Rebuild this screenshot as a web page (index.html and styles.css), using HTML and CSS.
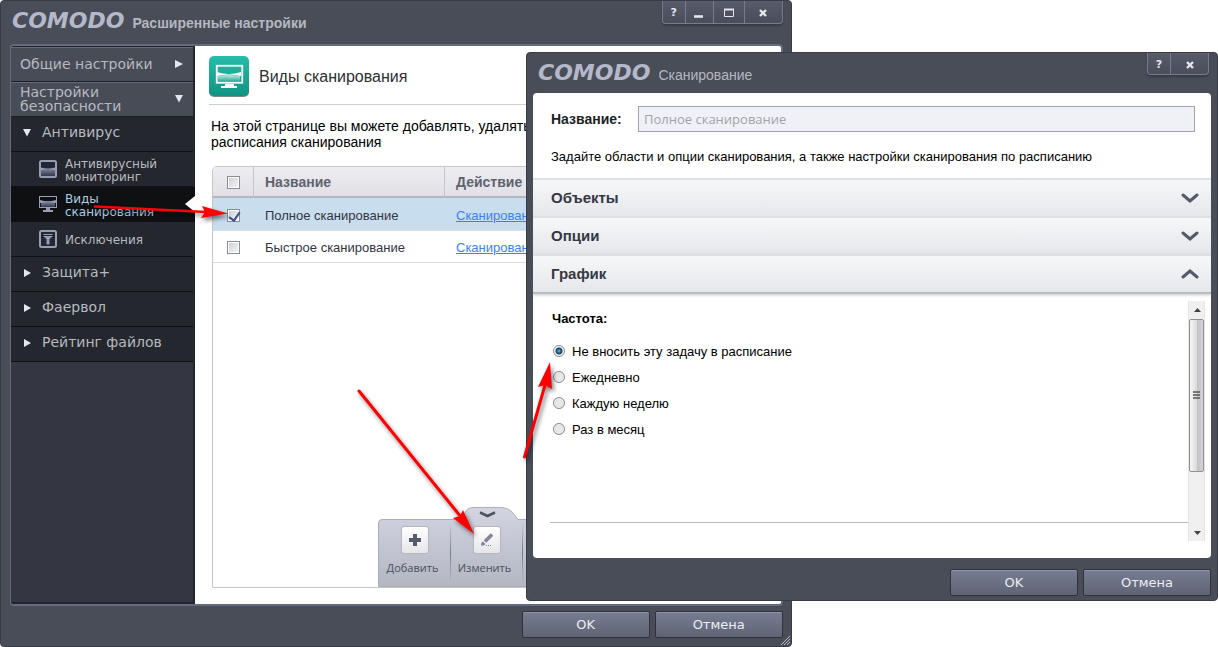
FILE: index.html
```html
<!DOCTYPE html>
<html lang="ru">
<head>
<meta charset="utf-8">
<title>COMODO</title>
<link rel="stylesheet" href="styles.css">
</head>
<body>
<div class="desktop">
  <section class="window settings" aria-label="Расширенные настройки">
    <header class="titlebar">
      <span class="logo">COMODO</span>
      <h1 class="caption strong">Расширенные настройки</h1>
      <div class="controls">
        <button type="button" class="ctl small" aria-label="Справка"><b>?</b></button>
        <button type="button" class="ctl min" aria-label="Свернуть"><svg width="10" height="10"><path d="M0 8.500h9" stroke="#e4e6ee" stroke-width="2.600"/></svg></button>
        <button type="button" class="ctl max" aria-label="Развернуть"><svg width="10" height="10"><path d="M.5 1v7.500h9V1" fill="none" stroke="#e4e6ee"/><path d="M0 1.500h10" stroke="#e4e6ee" stroke-width="2"/></svg></button>
        <button type="button" class="ctl close" aria-label="Закрыть"><svg width="10" height="10"><path d="M2 2l6 6M8 2l-6 6" stroke="#e4e6ee" stroke-width="2.400"/></svg></button>
      </div>
    </header>

    <div class="frame">
      <nav class="sidebar">
        <a href="#" class="group">Общие настройки<svg class="tri" width="8" height="10"><path d="M0 1v8l8-4z"/></svg></a>
        <a href="#" class="group">Настройки<br>безопасности<svg class="tri" width="8" height="10"><path d="M0 1h8l-4 7.500z"/></svg></a>
        <a href="#" class="item"><svg class="tri" width="8" height="10"><path d="M0 2h8l-4 7.500z"/></svg>Антивирус</a>
        <a href="#" class="sub">
          <svg width="18" height="18" fill="none"><defs><linearGradient id="gl" x2="0" y2="1"><stop offset="0" stop-color="#7b8299"/><stop offset="1" stop-color="#353a47"/></linearGradient></defs><path d="M2 9h14v7H2z" fill="url(#gl)"/><rect x="1" y="1" width="16" height="16" rx="1.500" stroke="#969db6" stroke-width="2"/><path d="M2 7.500q7 2 14 0v2.500q-7-1.500-14 0z" fill="#969db6"/></svg>
          <span>Антивирусный<br>мониторинг</span></a>
        <a href="#" class="sub active">
          <svg width="18" height="18" fill="none"><path d="M2 7h14v5H2z" fill="url(#gl)"/><rect x=".5" y="1.500" width="17" height="11" stroke="#969db6"/><path d="M1 5q8 2.500 16 0v3q-8-2-16 0z" fill="#969db6"/><path d="M7 13h4v2h3v2H4v-2h3z" fill="#969db6"/></svg>
          <span>Виды<br>сканирования</span></a>
        <a href="#" class="sub">
          <svg width="18" height="18" fill="none"><rect x="1" y="1" width="16" height="16" rx="1.500" stroke="#969db6" stroke-width="2"/><path d="M4.500 4.500h9" stroke="#969db6"/><path d="M4 6h10l-3.500 3v5.500h-3V9z" fill="#969db6"/></svg>
          <span>Исключения</span></a>
        <a href="#" class="item"><svg class="tri" width="8" height="10"><path d="M1 2v8l7-4z"/></svg>Защита+</a>
        <a href="#" class="item"><svg class="tri" width="8" height="10"><path d="M1 2v8l7-4z"/></svg>Фаервол</a>
        <a href="#" class="item"><svg class="tri" width="8" height="10"><path d="M1 2v8l7-4z"/></svg>Рейтинг файлов</a>
      </nav>

      <main class="content">
        <div class="heading">
          <svg width="40" height="42" viewBox="0 0 40 42"><defs><linearGradient id="teal" x2="0" y2="1"><stop offset="0" stop-color="#27bda9"/><stop offset="1" stop-color="#0f9482"/></linearGradient><linearGradient id="scr" x2="0" y2="1"><stop offset="0" stop-color="#bfe8e2"/><stop offset="1" stop-color="#1fa392"/></linearGradient></defs><rect y="2" width="40" height="39" rx="5" fill="#7d8a8d"/><rect width="40" height="40" rx="5" fill="url(#teal)"/><path d="M9 20q11-2 22 0v6H9z" fill="url(#scr)"/><path d="M8 16q12 4 24 0v4q-12-3-24 0z" fill="#fff"/><rect x="7.750" y="9.750" width="25.500" height="17" fill="none" stroke="#fff" stroke-width="1.800"/><path d="M16 28h9v2h3v2H12v-2h4z" fill="#fff"/></svg>
          <h2>Виды сканирования</h2>
        </div>
        <p class="intro">На этой странице вы можете добавлять, удалять<br>расписания сканирования</p>
        <div class="list">
          <table>
            <thead><tr><th class="c-check"><input type="checkbox" aria-label="Выбрать все"></th><th class="c-name">Название</th><th>Действие</th></tr></thead>
            <tbody>
              <tr class="selected"><td><input type="checkbox" checked aria-label="Полное сканирование"></td><td>Полное сканирование</td><td><a href="#">Сканирование</a></td></tr>
              <tr><td><input type="checkbox" aria-label="Быстрое сканирование"></td><td>Быстрое сканирование</td><td><a href="#">Сканирование</a></td></tr>
            </tbody>
          </table>
          <div class="toolbar">
            <svg class="tab" width="70" height="14"><defs><linearGradient id="tabg" x2="0" y2="1"><stop offset="0" stop-color="#d3d6e0"/><stop offset="1" stop-color="#cdd0dc"/></linearGradient></defs><path d="M0 12.500Q6 12 9 6Q11 .5 17 .500H46Q52 .5 56 5L62 12.500V14H0z" fill="url(#tabg)"/><path d="M0 12.500Q6 12 9 6Q11 .5 17 .500H46Q52 .5 56 5L62 12.500" fill="none" stroke="#adb1bb"/><path d="M24 5.500l7.500 3.500 7.500-3.500" fill="none" stroke="#4d5262" stroke-width="2.500"/></svg>
            <button type="button" class="tool"><span class="tile"><svg width="14" height="14"><path d="M7 1v12M1 7h12" stroke="#555b6c" stroke-width="4"/></svg></span>Добавить</button>
            <button type="button" class="tool"><span class="tile"><svg width="14" height="14"><path d="M5 8.500L12 1.500" stroke="#7f8596" stroke-width="3.500"/><path d="M1 12.500q0-3.500 2-4l2.500 2.500q-1 2-4.500 1.500z" fill="#7f8596"/><path d="M6 12.500h6" stroke="#7f8596" stroke-dasharray="1 1"/></svg></span>Изменить</button>
          </div>
        </div>
      </main>
    </div>

    <footer class="actions">
      <button type="button" class="btn">OK</button>
      <button type="button" class="btn">Отмена</button>
      <svg class="grip" width="9" height="9"><path d="M0 9l9-9M3 9l6-6M6 9l3-3" stroke="#b8bccb"/></svg>
    </footer>
  </section>

  <section class="window scan" role="dialog" aria-label="Сканирование">
    <header class="titlebar">
      <span class="logo">COMODO</span>
      <h1 class="caption">Сканирование</h1>
      <div class="controls">
        <button type="button" class="ctl small" aria-label="Справка"><b>?</b></button>
        <button type="button" class="ctl close" aria-label="Закрыть"><svg width="10" height="10"><path d="M2 2l6 6M8 2l-6 6" stroke="#e4e6ee" stroke-width="2.400"/></svg></button>
      </div>
    </header>

    <div class="panel">
      <div class="field">
        <label for="name">Название:</label>
        <input id="name" type="text" value="Полное сканирование" readonly>
      </div>
      <p class="hint">Задайте области и опции сканирования, а также настройки сканирования по расписанию</p>
      <button type="button" class="fold">Объекты<svg width="18" height="12"><path d="M2 3l7 6 7-6"/></svg></button>
      <button type="button" class="fold">Опции<svg width="18" height="12"><path d="M2 3l7 6 7-6"/></svg></button>
      <button type="button" class="fold open">График<svg width="18" height="12"><path d="M2 9l7-6 7 6"/></svg></button>
      <div class="schedule">
        <fieldset>
          <legend>Частота:</legend>
          <label><input type="radio" name="freq" checked>Не вносить эту задачу в расписание</label>
          <label><input type="radio" name="freq">Ежедневно</label>
          <label><input type="radio" name="freq">Каждую неделю</label>
          <label><input type="radio" name="freq">Раз в месяц</label>
        </fieldset>
        <div class="scrollbar">
          <svg width="17" height="18"><path d="M5 11h7l-3.500-4z" fill="#444"/></svg>
          <div class="thumb"><svg width="8" height="9"><path d="M0 1h7M0 4h7M0 7h7" stroke="#555" stroke-width="1.500"/></svg></div>
          <svg width="17" height="17"><path d="M5 7h7l-3.500 4z" fill="#444"/></svg>
        </div>
      </div>
    </div>

    <footer class="actions">
      <button type="button" class="btn">OK</button>
      <button type="button" class="btn">Отмена</button>
    </footer>
  </section>

  <svg class="arrows" width="580" height="560" viewBox="0 0 580 560" aria-hidden="true">
    <g fill="#f00" stroke="#f00">
      <path d="M95 206.500L206 212" stroke-width="2.500" stroke-linecap="round"/><path d="M228 213.500L202 206l3 6-4 6z" stroke="none"/>
      <path d="M359 391L461 517" stroke-width="3" stroke-linecap="round"/><path d="M474 534l-11-24-3 6-7 2z" stroke="none"/>
      <path d="M524.500 457L545 385" stroke-width="3" stroke-linecap="round"/><path d="M550 362l-12 25 7-2 7 4z" stroke="none"/>
    </g>
  </svg>
</div>
</body>
</html>
```
FILE: styles.css
```css
* { box-sizing: border-box; }
body { margin: 0; background: #fff; font-family: "Liberation Sans", Arial, sans-serif; font-size: 13px; color: #000; }
button { font: inherit; margin: 0; padding: 0; }
h1, h2, p { margin: 0; font-weight: normal; }
svg { flex: none; display: block; }

.desktop { position: relative; min-height: 100vh; overflow: hidden; }
.window { position: absolute; display: flex; flex-direction: column; background: #494d58; border: 1px solid #383c47; border-radius: 4px; }
.settings { left: 0; top: 0; width: 65%; min-height: 100vh; padding: 0 8px 9px 9px; }
.scan { left: 526px; right: 0; top: 52px; padding: 0 6px 4px; }

.titlebar { display: flex; align-items: flex-start; height: 43px; }
.scan .titlebar { height: 40px; padding-left: 5px; }
.logo { font: italic bold 22px/22px "DejaVu Sans", Verdana, sans-serif; color: #b5b8ca; padding-top: 9px; }
.settings .logo { padding-left: 2px; }
.caption { font-size: 14px; line-height: 20px; color: #b4b7c1; padding: 12px 0 0 8px; }
.strong { font-weight: bold; }
.controls { display: flex; margin-left: auto; height: 23px; background: linear-gradient(#575b6b, #4a4e5a); border: 1px solid #767b92; border-top: 0; border-radius: 0 0 4px 4px; box-shadow: 0 2px 2px #383c47; }
.scan .controls { height: 22px; margin-right: 2px; }
.ctl { display: flex; align-items: center; justify-content: center; background: none; border: 0; border-right: 1px solid #767b92; color: #e4e6ee; padding-top: 2px; }
.ctl:last-child { border-right: 0; }
.ctl b { font: bold 11px/12px "DejaVu Sans", Verdana, sans-serif; }
.small { width: 23px; }
.min { width: 28px; }
.max { width: 31px; }
.close { width: 37px; }

.frame { flex: 1; display: flex; border: 2px solid #666a7d; border-left-width: 1px; border-radius: 4px; background: #fff; overflow: hidden; }
.sidebar { width: 184px; flex: none; background: #343741; border: solid #23252c; border-width: 1px 2px 2px 0; font-family: "DejaVu Sans", Verdana, sans-serif; }
.sidebar a { display: flex; align-items: center; height: 35px; color: #b7b9c1; text-decoration: none; border-bottom: 1px solid #0f1012; background: #25272e; }
.tri { fill: #e6e7ee; }
.sidebar .group { background: #484c57; font-size: 14px; line-height: 14px; padding: 0 10px 2px 9px; border-top: 1px solid #656c82; border-bottom-color: #1c1e24; }
.group .tri { margin-left: auto; }
.sidebar .item { font-size: 14px; padding: 0 0 4px 12px; gap: 11px; }
.sidebar .sub { font-size: 12px; line-height: 13px; padding-left: 28px; gap: 8px; }
.sub span { padding-top: 3px; }
.sidebar .active { position: relative; width: 184px; background: #0f1012; color: #a9cfe6; }
.active::after { content: ""; position: absolute; right: 0; top: 9px; border: solid transparent; border-width: 8px 10px 8px 0; border-right-color: #fff; }

.content { flex: 1; min-width: 0; display: flex; flex-direction: column; padding: 10px 12px 16px 14px; }
.heading { display: flex; align-items: center; gap: 10px; padding-bottom: 6px; border-bottom: 1px solid #cfcfd6; }
.heading h2 { font-size: 16px; line-height: 20px; color: #2c2f38; }
.intro { font-size: 14px; line-height: 16px; white-space: nowrap; padding: 13px 2px 16px; }
.list { flex: 1; margin-left: 3px; display: flex; flex-direction: column; border: 1px solid #c5c6cc; border-radius: 5px 5px 0 0; }
table { width: 100%; table-layout: fixed; border-collapse: separate; border-spacing: 0; }
th { height: 31px; text-align: left; font-size: 14px; color: #60626e; background: linear-gradient(#ececf1, #e0e0e6); border-bottom: 2px solid #b5b7be; border-right: 1px solid #c4c5cc; padding: 1px 11px 0; }
th:first-child { border-top-left-radius: 4px; }
.c-check { width: 41px; }
.c-name { width: 191px; }
td { height: 32px; padding: 2px 11px 0; color: #32353f; border-bottom: 1px solid #dcdde2; white-space: nowrap; }
th:first-child, td:first-child { padding: 2px 0 0 14px; }
.selected td { background: #c8dded; height: 33px; }
td a { color: #3b82f6; }
input[type=checkbox] { display: block; appearance: none; width: 13px; height: 13px; margin: 0; border: 1px solid #8b8d92; background: linear-gradient(135deg, #cbcfd5, #f6f6f6); box-shadow: inset 0 0 0 1px #fff; }
input[type=checkbox]:checked::after { content: ""; display: block; width: 5px; height: 9px; margin: 0 0 0 3px; border: solid #3d4e91; border-width: 0 2px 2px 0; transform: rotate(35deg); }

.toolbar { position: relative; margin: auto 0 0 165px; height: 68px; display: flex; background: linear-gradient(#cdd0dc, #b3b7c2); border: 1px solid #a9adb7; border-radius: 4px 0 0 0; }
.tab { position: absolute; left: 77px; top: -13px; }
.tool { width: 72px; display: flex; flex-direction: column; align-items: center; gap: 6px; border: 0; background: linear-gradient(#a4a8b600, #777c8f 50%, #a4a8b600) right / 1px 60px no-repeat; padding: 6px 5px 0 0; font: 11px/16px "Open Sans", sans-serif; color: #4a4e5b; }
.tile { display: flex; align-items: center; justify-content: center; width: 28px; height: 28px; margin-left: 4px; background: linear-gradient(#fff, #e6e6ea); border: 1px solid #b4b7c1; border-radius: 3px; }

.actions { position: relative; display: flex; justify-content: flex-end; gap: 5px; padding-top: 5px; }
.settings .actions { margin-bottom: -1px; }
.scan .actions { padding-top: 11px; }
.btn { width: 128px; height: 27px; border: 1px solid #2f323b; border-radius: 2px; background: linear-gradient(#777d92, #5f6374); box-shadow: inset 0 1px #8c93ae; color: #eceef4; font: 13px/20px "DejaVu Sans", Verdana, sans-serif; padding-top: 1px; }
.grip { position: absolute; right: -7px; bottom: -7px; }

.panel { background: #fff; border-radius: 4px; overflow: hidden; }
.field { display: flex; align-items: center; padding: 13px 16px 0 18px; }
.field label { width: 87px; flex: none; font-size: 14px; font-weight: bold; color: #1d1f26; }
.field input { flex: 1; min-width: 0; height: 26px; border: 1px solid #a0a2ad; background: #f0f1f6; color: #a1a3ab; font: 13px/20px "Open Sans", sans-serif; padding: 0 5px; }
.hint { font-size: 13px; line-height: 16px; padding: 17px 18px 13px; }
.fold { display: flex; width: 100%; height: 38px; align-items: center; justify-content: space-between; padding: 0 12px 2px 18px; border: 0; border-top: 2px solid #dedfe2; background: linear-gradient(#f6f7f8, #e6e7eb); font-size: 15px; font-weight: bold; color: #353842; }
.fold svg { fill: none; stroke: #555a6b; stroke-width: 3; stroke-linecap: round; margin-top: 2px; }
.open { height: 40px; border-bottom: 2px solid #b9bbbf; box-shadow: 0 1px 3px #c5c6ca; }
.schedule { display: flex; align-items: flex-start; padding: 7px 6px 17px 17px; }
fieldset { flex: 1; min-height: 222px; margin: 0; border: 0; border-bottom: 1px solid #bcbcbc; padding: 10px 2px 0; min-width: 0; }
legend { float: left; width: 100%; font-weight: bold; line-height: 16px; padding: 0 0 11px; }
fieldset label { clear: both; display: flex; align-items: center; gap: 6px; height: 26px; }
input[type=radio] { appearance: none; width: 12px; height: 12px; margin: 0 1px; border: 1px solid #85878b; border-radius: 50%; background: radial-gradient(#e9e9e9 30%, #cfd0d2); box-shadow: inset 0 0 0 1px #f8f8f8; }
input[type=radio]:checked { background: radial-gradient(circle at 5px 5px, #6fc3ea, #1c5f8d 2px, #123a5a 3px, #eee 4px); }
.scrollbar { width: 17px; height: 240px; display: flex; flex-direction: column; background: #f0f0f0; border: solid #e4e4e4; border-width: 0 1px; }
.scrollbar > svg:last-child { margin-top: auto; }
.thumb { width: 15px; height: 153px; display: flex; align-items: center; justify-content: center; border: 1px solid #8f9195; border-radius: 2px; background: linear-gradient(90deg, #f5f5f5, #dcdcde 50%, #c0c1c5 55%, #d5d5d8); }

.arrows { position: absolute; left: 0; top: 0; pointer-events: none; filter: drop-shadow(2px 3px 2px rgba(0, 0, 0, .5)); }
```
